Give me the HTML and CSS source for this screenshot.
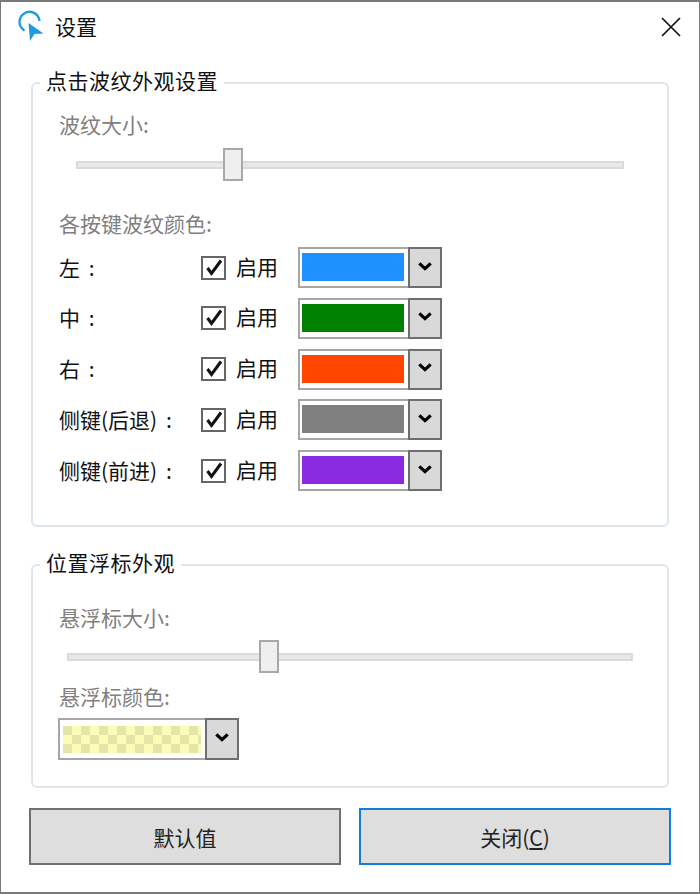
FILE: index.html
```html
<!DOCTYPE html>
<html lang="zh-CN">
<head>
<meta charset="utf-8">
<title>设置</title>
<link rel="stylesheet" href="styles.css">
</head>
<body>
<div class="window">
  <header class="titlebar">
    <svg class="app-icon" viewBox="0 0 30 32" width="30" height="32"><path d="M8.5 20.5A10 10 0 1 1 23.5 11" fill="none" stroke="#1f9be0" stroke-width="2.3"/><path d="M12.5 13 27.5 23.5 18.5 24 14 31Z" fill="#1f9be0"/></svg>
    <span class="title">设置</span>
    <svg class="close" viewBox="0 0 20 20" width="20" height="20"><path d="M1 1 19 19M19 1 1 19" stroke="#111" stroke-width="1.7" fill="none"/></svg>
  </header>

  <fieldset class="group group-ripple">
    <legend>点击波纹外观设置</legend>
    <div class="label muted">波纹大小:</div>
    <div class="slider slider-ripple"><div class="track"></div><div class="thumb thumb-ripple"></div></div>
    <div class="label muted label-colors">各按键波纹颜色:</div>
    <div class="rows">
      <div class="row">
        <span class="key">左 :</span>
        <span class="check"><svg viewBox="0 0 25 24" width="25" height="24"><rect x="1" y="1" width="23" height="22" fill="#fff" stroke="#666" stroke-width="2"/><path d="M6.5 12 10.5 17.5 20 4.5" fill="none" stroke="#111" stroke-width="3"/></svg></span>
        <span class="enable">启用</span>
        <div class="combo"><div class="swatch blue"></div><div class="arrow"><svg viewBox="0 0 16 10" width="14" height="9"><path d="M1.5 1.5 8 7.5 14.5 1.5" fill="none" stroke="#000" stroke-width="3.6"/></svg></div></div>
      </div>
      <div class="row">
        <span class="key">中 :</span>
        <span class="check"><svg viewBox="0 0 25 24" width="25" height="24"><rect x="1" y="1" width="23" height="22" fill="#fff" stroke="#666" stroke-width="2"/><path d="M6.5 12 10.5 17.5 20 4.5" fill="none" stroke="#111" stroke-width="3"/></svg></span>
        <span class="enable">启用</span>
        <div class="combo"><div class="swatch green"></div><div class="arrow"><svg viewBox="0 0 16 10" width="14" height="9"><path d="M1.5 1.5 8 7.5 14.5 1.5" fill="none" stroke="#000" stroke-width="3.6"/></svg></div></div>
      </div>
      <div class="row">
        <span class="key">右 :</span>
        <span class="check"><svg viewBox="0 0 25 24" width="25" height="24"><rect x="1" y="1" width="23" height="22" fill="#fff" stroke="#666" stroke-width="2"/><path d="M6.5 12 10.5 17.5 20 4.5" fill="none" stroke="#111" stroke-width="3"/></svg></span>
        <span class="enable">启用</span>
        <div class="combo"><div class="swatch orange"></div><div class="arrow"><svg viewBox="0 0 16 10" width="14" height="9"><path d="M1.5 1.5 8 7.5 14.5 1.5" fill="none" stroke="#000" stroke-width="3.6"/></svg></div></div>
      </div>
      <div class="row">
        <span class="key">侧键(后退) :</span>
        <span class="check"><svg viewBox="0 0 25 24" width="25" height="24"><rect x="1" y="1" width="23" height="22" fill="#fff" stroke="#666" stroke-width="2"/><path d="M6.5 12 10.5 17.5 20 4.5" fill="none" stroke="#111" stroke-width="3"/></svg></span>
        <span class="enable">启用</span>
        <div class="combo"><div class="swatch gray"></div><div class="arrow"><svg viewBox="0 0 16 10" width="14" height="9"><path d="M1.5 1.5 8 7.5 14.5 1.5" fill="none" stroke="#000" stroke-width="3.6"/></svg></div></div>
      </div>
      <div class="row">
        <span class="key">侧键(前进) :</span>
        <span class="check"><svg viewBox="0 0 25 24" width="25" height="24"><rect x="1" y="1" width="23" height="22" fill="#fff" stroke="#666" stroke-width="2"/><path d="M6.5 12 10.5 17.5 20 4.5" fill="none" stroke="#111" stroke-width="3"/></svg></span>
        <span class="enable">启用</span>
        <div class="combo"><div class="swatch purple"></div><div class="arrow"><svg viewBox="0 0 16 10" width="14" height="9"><path d="M1.5 1.5 8 7.5 14.5 1.5" fill="none" stroke="#000" stroke-width="3.6"/></svg></div></div>
      </div>
    </div>
  </fieldset>

  <fieldset class="group group-float">
    <legend>位置浮标外观</legend>
    <div class="label muted">悬浮标大小:</div>
    <div class="slider slider-float"><div class="track"></div><div class="thumb thumb-float"></div></div>
    <div class="label muted label-float-color">悬浮标颜色:</div>
    <div class="combo combo-wide"><div class="swatch checker"></div><div class="arrow"><svg viewBox="0 0 16 10" width="14" height="9"><path d="M1.5 1.5 8 7.5 14.5 1.5" fill="none" stroke="#000" stroke-width="3.6"/></svg></div></div>
  </fieldset>

  <div class="actions">
    <button class="btn" type="button">默认值</button>
    <button class="btn btn-focus" type="button">关闭(<u>C</u>)</button>
  </div>
</div>
</body>
</html>
```
FILE: styles.css
```css
* { box-sizing: border-box; }
html, body { margin: 0; padding: 0; background: #fff; }
body {
  width: 700px;
  height: 894px;
  overflow: hidden;
  font-family: "Noto Sans CJK SC", "Noto Sans", sans-serif;
  font-size: 21px;
  color: #222;
}
.window {
  width: 700px;
  height: 894px;
  border: 2px solid #7a7a7a;
  border-left-width: 1px;
  border-right-width: 1px;
  background: #fff;
  display: flex;
  flex-direction: column;
  padding: 0 28px;
}
.titlebar {
  height: 67px;
  display: flex;
  align-items: flex-start;
  margin: 0 -28px;
  padding: 8px 18px 0 15px;
  flex: none;
}
.app-icon { flex: none; }
.title { margin: 2px 0 0 9px; font-size: 21px; line-height: 28px; color: #111; }
.close { margin: 7px 0 0 auto; }

.group {
  margin: 0 0 0 2px;
  width: 638px;
  padding: 0;
  border: 2px solid #dfe6ec;
  border-radius: 6px;
  min-inline-size: 0;
  flex: none;
}
.group legend {
  margin-left: -19px;
  padding: 0 6px;
  height: 28px;
  font-size: 21px;
  line-height: 23px;
  color: #111;
  letter-spacing: 0.5px;
}
.group-ripple { height: 458px; padding: 14px 0 0 26px; }
.group-float { height: 237px; margin-top: 24px; padding: 25px 0 0 26px; }

.label { font-size: 21px; line-height: 26px; }
.muted { color: #808080; }
.slider { position: relative; height: 34px; }
.track {
  position: absolute;
  top: 13px;
  left: 0;
  right: 0;
  height: 8px;
  background: #e8e8e8;
  border: 2px solid #dadada;
}
.thumb {
  position: absolute;
  top: 0;
  width: 20px;
  height: 33px;
  background: #efefef;
  border: 2px solid #a8a8a8;
}
.slider-ripple { margin: 11px 0 0 17px; width: 548px; }
.thumb-ripple { left: 147px; }
.slider-float { margin: 10px 0 0 8px; width: 566px; }
.thumb-float { left: 192px; }
.label-colors { margin-top: 28px; }
.label-float-color { margin-top: 9px; }

.rows { display: flex; flex-direction: column; gap: 9.75px; margin-top: 11px; }
.row { display: flex; align-items: center; height: 41px; }
.key { width: 142px; flex: none; font-size: 21px; color: #111; white-space: nowrap; word-spacing: 4px; margin-top: -2px; }
.check { width: 25px; height: 24px; flex: none; display: block; }
.check svg { display: block; }
.enable { margin-left: 10px; width: 62px; flex: none; font-size: 21px; color: #111; margin-top: -4px; }

.combo {
  width: 144px;
  height: 41px;
  display: flex;
  border: 2px solid #a6a6a6;
  background: #fff;
  flex: none;
}
.swatch { width: 102px; height: 28px; margin: 4px 0 0 2px; flex: none; }
.blue { background: #1e90ff; }
.green { background: #008000; }
.orange { background: #ff4500; }
.gray { background: #808080; }
.purple { background: #8a2be2; }
.arrow {
  margin: -2px -2px -2px auto;
  width: 34px;
  padding-bottom: 3px;
  background: #d9d9d9;
  border: 2px solid #6e6e6e;
  display: flex;
  align-items: center;
  justify-content: center;
  flex: none;
}
.arrow svg { display: block; }
.combo-wide { width: 181px; height: 42px; margin: 9px 0 0 -1px; }
.checker {
  width: 138px;
  height: 27px;
  margin: 6px 0 0 3px;
  background-color: #fcfcb8;
  background-image:
    linear-gradient(45deg, #e5e5a8 25%, transparent 25%, transparent 75%, #e5e5a8 75%),
    linear-gradient(45deg, #e5e5a8 25%, transparent 25%, transparent 75%, #e5e5a8 75%);
  background-size: 18px 18px;
  background-position: 9px 0, 0 9px;
}

.actions { display: flex; gap: 18px; margin-top: 20px; }
.btn {
  width: 312px;
  height: 57px;
  background: #dedede;
  border: 2px solid #707070;
  font: inherit;
  font-size: 21px;
  color: #222;
  padding: 0;
}
.btn-focus { border-color: #0f7fdc; }
```
